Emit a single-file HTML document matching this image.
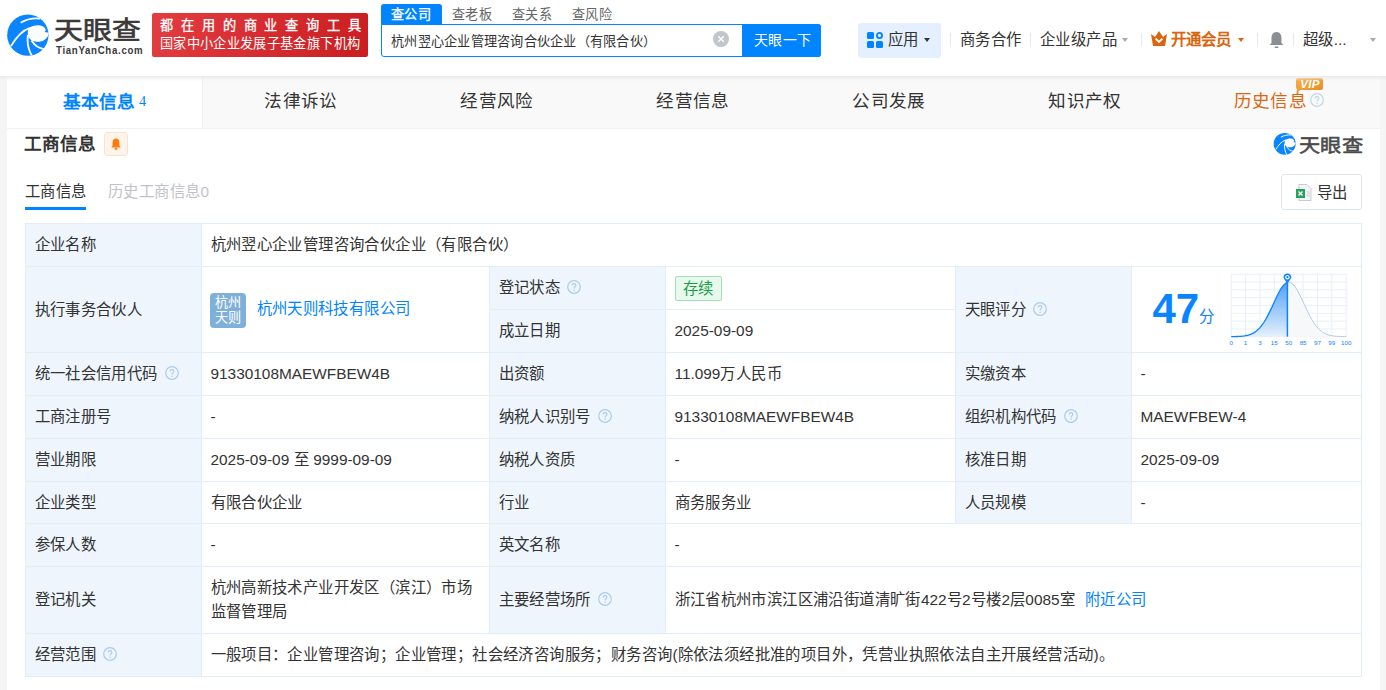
<!DOCTYPE html>
<html lang="zh-CN"><head><meta charset="utf-8">
<style>
*{box-sizing:border-box;margin:0;padding:0}
html,body{width:1386px;height:690px;overflow:hidden;background:#f5f5f5;font-family:"Liberation Sans",sans-serif;color:#333}
.a{position:absolute;white-space:nowrap}
#hdr{position:absolute;left:0;top:0;width:1386px;height:76px;background:#fff;z-index:3}
#shadow{position:absolute;left:0;top:76px;width:1386px;height:5px;background:linear-gradient(#eaeaea,rgba(240,240,240,0));z-index:2}
#main{position:absolute;left:7px;top:76px;width:1373px;height:614px;background:#fff}
.tab{position:absolute;top:76px;height:53px;background:#f9f9f9;font-size:17.6px;color:#333;text-align:center;line-height:50px}
.tab.on{background:#fff}
.q{display:inline-block;width:14px;height:14px;vertical-align:middle;position:relative;top:-1.5px}
.cell{position:absolute;font-size:15.4px;color:#333;display:flex;align-items:center;padding-left:8.5px;padding-bottom:0px;white-space:nowrap}
.lb{background:#eef5fd}
.hl{position:absolute;height:1px;background:#e3edf8}
.vl{position:absolute;width:1px;background:#e3edf8}
.dv{position:absolute;width:1px;height:13px;top:33px;background:#e8e8e8}
.av{display:inline-block;width:36px;height:35px;background:#7fb0d9;border-radius:4px;color:#fff;font-size:13.2px;line-height:15.3px;text-align:center;padding-top:2px;margin-right:11px;white-space:normal;position:relative;top:1px;vertical-align:middle}
.lnk{color:#0084ff}
.ct{white-space:nowrap;line-height:20px}
.tag{display:inline-block;height:25px;line-height:23px;padding:0 7.5px;border:1px solid #a3e0b6;background:#e7f9ec;color:#1a9d48;border-radius:2px;font-size:15.4px;margin-bottom:-1px}
.q{margin-left:7px}
.caret{position:absolute;width:0;height:0;border-left:3.5px solid transparent;border-right:3.5px solid transparent;border-top:4px solid #999;top:37.5px}
.c{letter-spacing:var(--ls,0.4px)}
.ct .c{line-height:17px}
</style></head><body>
<div id="hdr">
  <!-- logo -->
  <svg width="0" height="0" style="position:absolute"><defs><clipPath id="cc"><circle cx="343" cy="348" r="297"/></clipPath>
  <symbol id="logo" viewBox="0 0 690 690"><g clip-path="url(#cc)">
<rect width="690" height="690" fill="#0a84ff"/>
<path d="M352 250 C 420 200, 545 185, 588 245 C 605 270, 598 290, 578 302 L 700 320 L 700 330 L 645 330 C 620 410, 540 455, 450 440 C 385 428, 345 385, 343 330 C 342 295, 346 265, 352 250 Z" fill="#fff"/>
<path d="M240 170 C 320 118, 420 98, 520 108" stroke="#fff" stroke-width="26" fill="none"/>
<path d="M100 505 C 170 385, 260 280, 372 242" stroke="#fff" stroke-width="26" fill="none"/>
<path d="M343 345 C 330 450, 350 560, 405 650" stroke="#fff" stroke-width="26" fill="none"/>
<path d="M395 425 C 440 495, 500 540, 575 548" stroke="#fff" stroke-width="26" fill="none"/>
</g></symbol></defs></svg>
  <svg class="a" style="left:4px;top:11px" width="48" height="48"><use href="#logo"/></svg>
  <div class="a" style="left:54px;top:16px;font-size:26px;font-weight:normal;-webkit-text-stroke:0.7px #3c3838;color:#3c3838;line-height:30px;transform:scale(1.11,0.95);transform-origin:0 0">天眼查</div>
  <div class="a" style="left:55.5px;top:44px;font-size:10.5px;font-weight:bold;color:#3c3838;letter-spacing:0.75px;line-height:12px;transform:scaleX(0.92);transform-origin:0 0">TianYanCha.com</div>
  <!-- red banner -->
  <div class="a" style="left:152px;top:13px;width:216px;height:44px;border-radius:2px;background:linear-gradient(110deg,#e33c41,#c91d21)"></div>
  <div class="a" style="left:160px;top:17px;font-size:13.2px;color:#fff;letter-spacing:7.9px;line-height:18px;-webkit-text-stroke:0.3px #fff">都在用的商业查询工具</div>
  <div class="a" style="left:160px;top:35px;font-size:13.2px;color:#fff;letter-spacing:0.35px;line-height:18px">国家中小企业发展子基金旗下机构</div>
  <!-- search tabs -->
  <div class="a" style="left:381px;top:4px;width:61px;height:21px;background:#0084ff;border-radius:3px 3px 0 0"></div>
  <div class="a" style="left:391px;top:5px;font-size:13.2px;color:#fff;line-height:20px;-webkit-text-stroke:0.3px #fff"><span class="c">查公司</span></div>
  <div class="a" style="left:452px;top:5px;font-size:13.2px;color:#666;line-height:20px"><span class="c">查老板</span></div>
  <div class="a" style="left:512px;top:5px;font-size:13.2px;color:#666;line-height:20px"><span class="c">查关系</span></div>
  <div class="a" style="left:572px;top:5px;font-size:13.2px;color:#666;line-height:20px"><span class="c">查风险</span></div>
  <div class="a" style="left:381px;top:24px;width:440px;height:33px;border:1px solid #0084ff;border-radius:0 3px 3px 3px;background:#fff"></div>
  <div class="a" style="left:391px;top:32px;font-size:13.2px;color:#333;line-height:20px;--ls:0.25px"><span class="c">杭州翌心企业管理咨询合伙企业（有限合伙）</span></div>
  <svg class="a" style="left:713px;top:31px" width="16" height="16" viewBox="0 0 16 16"><circle cx="8" cy="8" r="8" fill="#c2c5cc"/><path d="M5.3 5.3L10.7 10.7M10.7 5.3L5.3 10.7" stroke="#fff" stroke-width="1.5"/></svg>
  <div class="a" style="left:742px;top:24px;width:79px;height:33px;background:#0084ff;border-radius:0 3px 3px 0"></div>
  <div class="a" style="left:754px;top:30px;font-size:14px;color:#fff;line-height:20px"><span class="c">天眼一下</span></div>
  <!-- right nav -->
  <div class="a" style="left:858px;top:23px;width:83px;height:35px;background:#e4efff;border-radius:3px"></div>
  <svg class="a" style="left:867px;top:32px" width="17" height="17" viewBox="0 0 17 17"><rect x="0" y="0" width="7" height="7" rx="1.5" fill="#0084ff"/><circle cx="12.5" cy="3.5" r="2.6" fill="none" stroke="#0084ff" stroke-width="1.8"/><rect x="0" y="9" width="7" height="7" rx="1.5" fill="#0084ff"/><rect x="9" y="9" width="7" height="7" rx="1.5" fill="#0084ff"/></svg>
  <div class="a" style="left:888px;top:30px;font-size:15.4px;color:#333;line-height:20px"><span class="c">应用</span></div>
  <div class="caret" style="left:924px;border-top-color:#333"></div>
  <div class="dv" style="left:950px"></div>
  <div class="a" style="left:960px;top:30px;font-size:15.4px;color:#333;line-height:20px"><span class="c">商务合作</span></div>
  <div class="dv" style="left:1030px"></div>
  <div class="a" style="left:1040px;top:30px;font-size:15.4px;color:#333;line-height:20px"><span class="c">企业级产品</span></div>
  <div class="caret" style="left:1122px;border-top-color:#aaa"></div>
  <div class="dv" style="left:1141px"></div>
  <svg class="a" style="left:1151px;top:31px" width="16" height="15" viewBox="0 0 16 15"><path d="M0 3 L4 6 L8 0 L12 6 L16 3 L14 15 L2 15 Z" fill="#d9650d"/><path d="M4.6 7.6 L8 11 L11.4 7.6" stroke="#fff" stroke-width="1.8" fill="none"/></svg>
  <div class="a" style="left:1171px;top:30px;font-size:15.4px;color:#d9650d;font-weight:bold;line-height:20px">开通会员</div>
  <div class="caret" style="left:1238px;border-top-color:#d9650d"></div>
  <div class="dv" style="left:1257px"></div>
  <svg class="a" style="left:1269px;top:31px" width="15" height="18" viewBox="0 0 15 18"><path d="M7.5 1 C4 1 2.5 4 2.5 7 L2.5 12 L0.5 14 L14.5 14 L12.5 12 L12.5 7 C12.5 4 11 1 7.5 1Z" fill="#8b8e94"/><rect x="5.5" y="15.5" width="4" height="1.5" rx="0.7" fill="#8b8e94"/></svg>
  <div class="dv" style="left:1293px"></div>
  <div class="a" style="left:1303px;top:30px;font-size:15.4px;color:#333;line-height:20px"><span class="c">超级</span>...</div>
  <div class="caret" style="left:1370px;border-top-color:#aaa"></div>
</div>
<div id="shadow"></div>
<div id="main"></div>
<!-- tabs -->
<div class="tab on" style="left:7px;width:195px;color:#0084ff;font-weight:bold">基本信息<span style="font-weight:normal;font-size:14.3px;margin-left:4px;vertical-align:1.5px;font-family:'Liberation Serif',serif">4</span></div>
<div class="tab" style="left:202px;width:1px;background:#eee"></div>
<div class="tab" style="left:203px;width:196px"><span class="c">法律诉讼</span></div>
<div class="tab" style="left:399px;width:196px"><span class="c">经营风险</span></div>
<div class="tab" style="left:595px;width:196px"><span class="c">经营信息</span></div>
<div class="tab" style="left:791px;width:196px"><span class="c">公司发展</span></div>
<div class="tab" style="left:987px;width:196px"><span class="c">知识产权</span></div>
<div class="tab" style="left:1183px;width:197px;padding-right:5px;color:#e0650f"><span class="c">历史信息</span><svg class="q" width="14" height="14" viewBox="0 0 14 14" style="margin-left:3px;top:-2px"><circle cx="7" cy="7" r="6.3" fill="none" stroke="#c5d5e5" stroke-width="1.2"/><path d="M5.1 5.5C5.1 4.3 5.9 3.6 7 3.6S8.9 4.3 8.9 5.4C8.9 6.6 7.1 6.8 7.1 8.4" fill="none" stroke="#c5d5e5" stroke-width="1.15"/><circle cx="7.1" cy="10.2" r="0.8" fill="#c5d5e5"/></svg></div>

<div class="a" style="left:7px;top:128px;width:1373px;height:1px;background:#f1f1f1"></div>
<!-- section header -->
<div class="a" style="left:24px;top:132px;font-size:17.6px;font-weight:bold;color:#333;line-height:24px">工商信息</div>
<div class="a" style="left:104px;top:132px;width:24px;height:24px;background:#fff4ea;border:1px solid #ffe2cc;border-radius:3px"></div>
<svg class="a" style="left:109px;top:137px" width="14" height="14" viewBox="0 0 14 14"><path d="M7 1.5C4.6 1.5 3.6 3.5 3.6 5.5L3.6 8.8L2.3 10.6L11.7 10.6L10.4 8.8L10.4 5.5C10.4 3.5 9.4 1.5 7 1.5Z" fill="#ff7a0a"/><ellipse cx="7" cy="11.8" rx="1.6" ry="1" fill="#ff7a0a"/></svg>
<!-- logo small -->
<svg class="a" style="left:1272px;top:131px" width="25.5" height="25.5"><use href="#logo"/></svg>
<div class="a" style="left:1299px;top:134px;font-size:19px;font-weight:normal;-webkit-text-stroke:0.55px #4a4a4a;color:#4a4a4a;line-height:26px;transform:scale(1.12,0.97);transform-origin:0 0">天眼查</div>
<!-- sub tabs -->
<div class="a" style="left:25px;top:181.5px;font-size:15.4px;color:#333;line-height:20px"><span class="c">工商信息</span></div>
<div class="a" style="left:25px;top:207px;width:61px;height:3px;background:#0084ff"></div>
<div class="a" style="left:108px;top:181.5px;font-size:15.4px;color:#bfc3c9;line-height:20px"><span class="c">历史工商信息</span>0</div>
<!-- export -->
<div class="a" style="left:1281px;top:174px;width:81px;height:36px;border:1px solid #dfe4ea;border-radius:3px;background:#fff"></div>
<svg class="a" style="left:1296px;top:184px" width="16" height="17" viewBox="0 0 16 17"><path d="M3 0.5H11L15 4.5V16.5H3Z" fill="#f4f5f6" stroke="#c7cbd0"/><rect x="0" y="5" width="9" height="9" fill="#22a15a"/><path d="M2.5 7.5L6.5 11.5M6.5 7.5L2.5 11.5" stroke="#fff" stroke-width="1.4"/><path d="M11 8h2.5M11 10h2.5M11 12h2.5" stroke="#c7cbd0"/></svg>
<div class="a" style="left:1317px;top:183px;font-size:15.4px;color:#333;line-height:20px"><span class="c">导出</span></div>
<div class="a" style="left:1152.5px;top:284.5px;font-size:42px;font-weight:bold;color:#0a84ff;line-height:48px">47</div>
<div class="a" style="left:1199px;top:307px;font-size:15.4px;color:#0a84ff;line-height:20px"><span class="c">分</span></div>
<svg class="a" style="left:1225px;top:268px" width="130" height="82" viewBox="0 0 130 82">
<defs><linearGradient id="bg1" x1="0" y1="0" x2="0" y2="1"><stop offset="0" stop-color="#3d96f5"/><stop offset="1" stop-color="#e3effc"/></linearGradient></defs>
<g stroke="#e8f0f9" stroke-width="1"><line x1="6.2" y1="6.2" x2="6.2" y2="68.7"/><line x1="20.6" y1="6.2" x2="20.6" y2="68.7"/><line x1="35.0" y1="6.2" x2="35.0" y2="68.7"/><line x1="49.3" y1="6.2" x2="49.3" y2="68.7"/><line x1="63.7" y1="6.2" x2="63.7" y2="68.7"/><line x1="78.1" y1="6.2" x2="78.1" y2="68.7"/><line x1="92.5" y1="6.2" x2="92.5" y2="68.7"/><line x1="106.8" y1="6.2" x2="106.8" y2="68.7"/><line x1="121.2" y1="6.2" x2="121.2" y2="68.7"/><line x1="6.2" y1="6.2" x2="121.2" y2="6.2"/><line x1="6.2" y1="14.0" x2="121.2" y2="14.0"/><line x1="6.2" y1="21.8" x2="121.2" y2="21.8"/><line x1="6.2" y1="29.6" x2="121.2" y2="29.6"/><line x1="6.2" y1="37.5" x2="121.2" y2="37.5"/><line x1="6.2" y1="45.3" x2="121.2" y2="45.3"/><line x1="6.2" y1="53.1" x2="121.2" y2="53.1"/><line x1="6.2" y1="60.9" x2="121.2" y2="60.9"/><line x1="6.2" y1="68.7" x2="121.2" y2="68.7"/></g>
<polygon points="62.4,14.4 63.7,14.2 65.6,14.6 67.5,15.9 69.5,18.0 71.4,20.7 73.3,24.0 75.2,27.8 77.1,31.8 79.0,35.9 81.0,40.1 82.9,44.1 84.8,47.9 86.7,51.4 88.6,54.5 90.5,57.2 92.5,59.6 94.4,61.6 96.3,63.2 98.2,64.6 100.1,65.6 102.0,66.4 104.0,67.1 105.9,67.5 107.8,67.9 109.7,68.1 111.6,68.3 113.5,68.4 115.5,68.5 117.4,68.6 119.3,68.6 121.2,68.7 121.2,68.7 62.4,68.7" fill="#f7f8fa"/>
<polyline points="62.4,14.4 63.7,14.2 65.6,14.6 67.5,15.9 69.5,18.0 71.4,20.7 73.3,24.0 75.2,27.8 77.1,31.8 79.0,35.9 81.0,40.1 82.9,44.1 84.8,47.9 86.7,51.4 88.6,54.5 90.5,57.2 92.5,59.6 94.4,61.6 96.3,63.2 98.2,64.6 100.1,65.6 102.0,66.4 104.0,67.1 105.9,67.5 107.8,67.9 109.7,68.1 111.6,68.3 113.5,68.4 115.5,68.5 117.4,68.6 119.3,68.6 121.2,68.7" fill="none" stroke="#b9cadb" stroke-width="1"/>
<polygon points="6.2,68.7 8.1,68.6 10.0,68.6 11.9,68.5 13.9,68.4 15.8,68.3 17.7,68.1 19.6,67.9 21.5,67.5 23.4,67.1 25.4,66.4 27.3,65.6 29.2,64.6 31.1,63.2 33.0,61.6 35.0,59.6 36.9,57.2 38.8,54.5 40.7,51.4 42.6,47.9 44.5,44.1 46.5,40.1 48.4,35.9 50.3,31.8 52.2,27.8 54.1,24.0 56.0,20.7 58.0,18.0 59.9,15.9 61.8,14.6 62.4,14.4 62.4,68.7 6.2,68.7" fill="url(#bg1)" opacity="0.9"/>
<polyline points="6.2,68.7 8.1,68.6 10.0,68.6 11.9,68.5 13.9,68.4 15.8,68.3 17.7,68.1 19.6,67.9 21.5,67.5 23.4,67.1 25.4,66.4 27.3,65.6 29.2,64.6 31.1,63.2 33.0,61.6 35.0,59.6 36.9,57.2 38.8,54.5 40.7,51.4 42.6,47.9 44.5,44.1 46.5,40.1 48.4,35.9 50.3,31.8 52.2,27.8 54.1,24.0 56.0,20.7 58.0,18.0 59.9,15.9 61.8,14.6 62.4,14.4" fill="none" stroke="#0a84ff" stroke-width="1.3"/>
<line x1="62.4" y1="12" x2="62.4" y2="68.7" stroke="#0a84ff" stroke-width="1.5"/>
<path d="M58.6,9.2 A3.8,3.8 0 1 1 66.2,9.2 Q66.2,11 62.4,15 Q58.6,11 58.6,9.2 Z" fill="#0a84ff"/><circle cx="62.4" cy="9.2" r="2.2" fill="#fff"/><circle cx="62.4" cy="9.2" r="1.1" fill="#0a84ff"/>
<g fill="#0a84ff" font-size="6.2" text-anchor="middle" font-family="Liberation Sans, sans-serif"><text x="6.2" y="77.2">0</text><text x="20.6" y="77.2">1</text><text x="35.0" y="77.2">3</text><text x="49.3" y="77.2">15</text><text x="63.7" y="77.2">50</text><text x="78.1" y="77.2">85</text><text x="92.5" y="77.2">97</text><text x="106.8" y="77.2">99</text><text x="121.2" y="77.2">100</text></g>
</svg>
<!-- VIP badge -->
<svg class="a" style="left:1295px;top:77px" width="30" height="18" viewBox="0 0 30 18"><defs><linearGradient id="vg" x1="0" y1="0" x2="1" y2="1"><stop offset="0" stop-color="#f6b048"/><stop offset="1" stop-color="#e8891d"/></linearGradient></defs><path d="M3 1H26Q28 1 28 3V11Q28 13 26 13H5L1.5 16.5L2 12Q1 11.5 1 10V3Q1 1 3 1Z" fill="url(#vg)"/><text x="15" y="11.2" font-size="11.5" font-weight="bold" font-style="italic" fill="#fff" text-anchor="middle" letter-spacing="0.3" font-family="Liberation Sans, sans-serif">VIP</text></svg>
<div class="a lb" style="left:25px;top:223px;width:176px;height:453px"></div>
<div class="a lb" style="left:489px;top:266px;width:176px;height:367px"></div>
<div class="a lb" style="left:955px;top:266px;width:176px;height:257px"></div>
<div class="hl" style="left:25px;top:223px;width:1337px"></div>
<div class="hl" style="left:25px;top:266px;width:1337px"></div>
<div class="hl" style="left:489px;top:309px;width:467px"></div>
<div class="hl" style="left:25px;top:352px;width:1337px"></div>
<div class="hl" style="left:25px;top:395px;width:1337px"></div>
<div class="hl" style="left:25px;top:438px;width:1337px"></div>
<div class="hl" style="left:25px;top:481px;width:1337px"></div>
<div class="hl" style="left:25px;top:523px;width:1337px"></div>
<div class="hl" style="left:25px;top:566px;width:1337px"></div>
<div class="hl" style="left:25px;top:633px;width:1337px"></div>
<div class="hl" style="left:25px;top:676px;width:1337px"></div>
<div class="vl" style="left:25px;top:223px;height:454px"></div>
<div class="vl" style="left:1361px;top:223px;height:454px"></div>
<div class="vl" style="left:201px;top:223px;height:454px"></div>
<div class="vl" style="left:489px;top:266px;height:368px"></div>
<div class="vl" style="left:665px;top:266px;height:368px"></div>
<div class="vl" style="left:955px;top:266px;height:258px"></div>
<div class="vl" style="left:1131px;top:266px;height:258px"></div>
<div class="cell" style="left:26px;top:224px;width:175px;height:42px;"><div class="ct"><span class="c">企业名称</span></div></div>
<div class="cell" style="left:202px;top:224px;width:1159px;height:42px;"><div class="ct"><span class="c">杭州翌心企业管理咨询合伙企业（有限合伙）</span></div></div>
<div class="cell" style="left:26px;top:267px;width:175px;height:85px;"><div class="ct"><span class="c">执行事务合伙人</span></div></div>
<div class="cell" style="left:202px;top:267px;width:287px;height:85px;padding-left:7.5px"><div class="ct"><span class="av">杭州<br>天则</span><span class="lnk"><span class="c">杭州天则科技有限公司</span></span></div></div>
<div class="cell" style="left:490px;top:267px;width:175px;height:42px;"><div class="ct"><span class="c">登记状态</span><svg class="q" width="14" height="14" viewBox="0 0 14 14"><circle cx="7" cy="7" r="6.3" fill="none" stroke="#abcbee" stroke-width="1.2"/><path d="M5.1 5.5C5.1 4.3 5.9 3.6 7 3.6S8.9 4.3 8.9 5.4C8.9 6.6 7.1 6.8 7.1 8.4" fill="none" stroke="#abcbee" stroke-width="1.15"/><circle cx="7.1" cy="10.2" r="0.8" fill="#abcbee"/></svg></div></div>
<div class="cell" style="left:666px;top:267px;width:289px;height:42px;"><div class="ct"><span class="tag"><span class="c">存续</span></span></div></div>
<div class="cell" style="left:490px;top:310px;width:175px;height:42px;"><div class="ct"><span class="c">成立日期</span></div></div>
<div class="cell" style="left:666px;top:310px;width:289px;height:42px;"><div class="ct">2025-09-09</div></div>
<div class="cell" style="left:956px;top:267px;width:175px;height:85px;"><div class="ct"><span class="c">天眼评分</span><svg class="q" width="14" height="14" viewBox="0 0 14 14"><circle cx="7" cy="7" r="6.3" fill="none" stroke="#abcbee" stroke-width="1.2"/><path d="M5.1 5.5C5.1 4.3 5.9 3.6 7 3.6S8.9 4.3 8.9 5.4C8.9 6.6 7.1 6.8 7.1 8.4" fill="none" stroke="#abcbee" stroke-width="1.15"/><circle cx="7.1" cy="10.2" r="0.8" fill="#abcbee"/></svg></div></div>
<div class="cell" style="left:1132px;top:267px;width:229px;height:85px;"><div class="ct"></div></div>
<div class="cell" style="left:26px;top:353px;width:175px;height:42px;"><div class="ct"><span class="c">统一社会信用代码</span><svg class="q" width="14" height="14" viewBox="0 0 14 14"><circle cx="7" cy="7" r="6.3" fill="none" stroke="#abcbee" stroke-width="1.2"/><path d="M5.1 5.5C5.1 4.3 5.9 3.6 7 3.6S8.9 4.3 8.9 5.4C8.9 6.6 7.1 6.8 7.1 8.4" fill="none" stroke="#abcbee" stroke-width="1.15"/><circle cx="7.1" cy="10.2" r="0.8" fill="#abcbee"/></svg></div></div>
<div class="cell" style="left:202px;top:353px;width:287px;height:42px;"><div class="ct">91330108MAEWFBEW4B</div></div>
<div class="cell" style="left:490px;top:353px;width:175px;height:42px;"><div class="ct"><span class="c">出资额</span></div></div>
<div class="cell" style="left:666px;top:353px;width:289px;height:42px;"><div class="ct">11.099<span class="c">万人民币</span></div></div>
<div class="cell" style="left:956px;top:353px;width:175px;height:42px;"><div class="ct"><span class="c">实缴资本</span></div></div>
<div class="cell" style="left:1132px;top:353px;width:229px;height:42px;"><div class="ct">-</div></div>
<div class="cell" style="left:26px;top:396px;width:175px;height:42px;"><div class="ct"><span class="c">工商注册号</span></div></div>
<div class="cell" style="left:202px;top:396px;width:287px;height:42px;"><div class="ct">-</div></div>
<div class="cell" style="left:490px;top:396px;width:175px;height:42px;"><div class="ct"><span class="c">纳税人识别号</span><svg class="q" width="14" height="14" viewBox="0 0 14 14"><circle cx="7" cy="7" r="6.3" fill="none" stroke="#abcbee" stroke-width="1.2"/><path d="M5.1 5.5C5.1 4.3 5.9 3.6 7 3.6S8.9 4.3 8.9 5.4C8.9 6.6 7.1 6.8 7.1 8.4" fill="none" stroke="#abcbee" stroke-width="1.15"/><circle cx="7.1" cy="10.2" r="0.8" fill="#abcbee"/></svg></div></div>
<div class="cell" style="left:666px;top:396px;width:289px;height:42px;"><div class="ct">91330108MAEWFBEW4B</div></div>
<div class="cell" style="left:956px;top:396px;width:175px;height:42px;"><div class="ct"><span class="c">组织机构代码</span><svg class="q" width="14" height="14" viewBox="0 0 14 14"><circle cx="7" cy="7" r="6.3" fill="none" stroke="#abcbee" stroke-width="1.2"/><path d="M5.1 5.5C5.1 4.3 5.9 3.6 7 3.6S8.9 4.3 8.9 5.4C8.9 6.6 7.1 6.8 7.1 8.4" fill="none" stroke="#abcbee" stroke-width="1.15"/><circle cx="7.1" cy="10.2" r="0.8" fill="#abcbee"/></svg></div></div>
<div class="cell" style="left:1132px;top:396px;width:229px;height:42px;"><div class="ct">MAEWFBEW-4</div></div>
<div class="cell" style="left:26px;top:439px;width:175px;height:42px;"><div class="ct"><span class="c">营业期限</span></div></div>
<div class="cell" style="left:202px;top:439px;width:287px;height:42px;"><div class="ct">2025-09-09 <span class="c">至</span> 9999-09-09</div></div>
<div class="cell" style="left:490px;top:439px;width:175px;height:42px;"><div class="ct"><span class="c">纳税人资质</span></div></div>
<div class="cell" style="left:666px;top:439px;width:289px;height:42px;"><div class="ct">-</div></div>
<div class="cell" style="left:956px;top:439px;width:175px;height:42px;"><div class="ct"><span class="c">核准日期</span></div></div>
<div class="cell" style="left:1132px;top:439px;width:229px;height:42px;"><div class="ct">2025-09-09</div></div>
<div class="cell" style="left:26px;top:482px;width:175px;height:41px;"><div class="ct"><span class="c">企业类型</span></div></div>
<div class="cell" style="left:202px;top:482px;width:287px;height:41px;"><div class="ct"><span class="c">有限合伙企业</span></div></div>
<div class="cell" style="left:490px;top:482px;width:175px;height:41px;"><div class="ct"><span class="c">行业</span></div></div>
<div class="cell" style="left:666px;top:482px;width:289px;height:41px;"><div class="ct"><span class="c">商务服务业</span></div></div>
<div class="cell" style="left:956px;top:482px;width:175px;height:41px;"><div class="ct"><span class="c">人员规模</span></div></div>
<div class="cell" style="left:1132px;top:482px;width:229px;height:41px;"><div class="ct">-</div></div>
<div class="cell" style="left:26px;top:524px;width:175px;height:42px;"><div class="ct"><span class="c">参保人数</span></div></div>
<div class="cell" style="left:202px;top:524px;width:287px;height:42px;"><div class="ct">-</div></div>
<div class="cell" style="left:490px;top:524px;width:175px;height:42px;"><div class="ct"><span class="c">英文名称</span></div></div>
<div class="cell" style="left:666px;top:524px;width:695px;height:42px;"><div class="ct">-</div></div>
<div class="cell" style="left:26px;top:567px;width:175px;height:66px;"><div class="ct"><span class="c">登记机关</span></div></div>
<div class="cell" style="left:202px;top:567px;width:287px;height:66px;"><div class="ct"><div style="white-space:normal;line-height:24px"><span class="c">杭州高新技术产业开发区（滨江）市场</span><br><span class="c">监督管理局</span></div></div></div>
<div class="cell" style="left:490px;top:567px;width:175px;height:66px;"><div class="ct"><span class="c">主要经营场所</span><svg class="q" width="14" height="14" viewBox="0 0 14 14"><circle cx="7" cy="7" r="6.3" fill="none" stroke="#abcbee" stroke-width="1.2"/><path d="M5.1 5.5C5.1 4.3 5.9 3.6 7 3.6S8.9 4.3 8.9 5.4C8.9 6.6 7.1 6.8 7.1 8.4" fill="none" stroke="#abcbee" stroke-width="1.15"/><circle cx="7.1" cy="10.2" r="0.8" fill="#abcbee"/></svg></div></div>
<div class="cell" style="left:666px;top:567px;width:695px;height:66px;"><div class="ct"><span class="c">浙江省杭州市滨江区浦沿街道清旷街</span>422<span class="c">号</span>2<span class="c">号楼</span>2<span class="c">层</span>0085<span class="c">室</span><span class="lnk" style="margin-left:10px"><span class="c">附近公司</span></span></div></div>
<div class="cell" style="left:26px;top:634px;width:175px;height:42px;"><div class="ct"><span class="c">经营范围</span><svg class="q" width="14" height="14" viewBox="0 0 14 14"><circle cx="7" cy="7" r="6.3" fill="none" stroke="#abcbee" stroke-width="1.2"/><path d="M5.1 5.5C5.1 4.3 5.9 3.6 7 3.6S8.9 4.3 8.9 5.4C8.9 6.6 7.1 6.8 7.1 8.4" fill="none" stroke="#abcbee" stroke-width="1.15"/><circle cx="7.1" cy="10.2" r="0.8" fill="#abcbee"/></svg></div></div>
<div class="cell" style="left:202px;top:634px;width:1159px;height:42px;"><div class="ct"><span class="c">一般项目：企业管理咨询；企业管理；社会经济咨询服务；财务咨询</span>(<span class="c">除依法须经批准的项目外，凭营业执照依法自主开展经营活动</span>)<span class="c">。</span></div></div>

</body></html>
